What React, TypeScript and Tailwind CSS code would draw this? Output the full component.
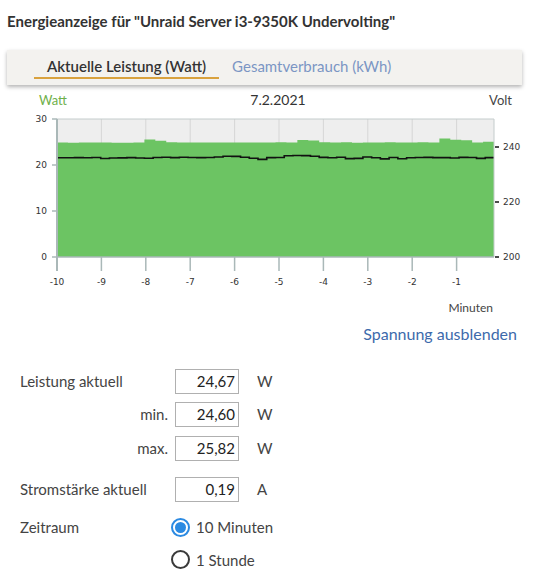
import React from "react";

const PX0 = 57;
const PX1 = 494;
const tops = [142.5,142.8,142.6,142.5,142.6,142.7,142.8,142.6,139.5,140.8,142.3,142.5,142.4,142.6,142.5,142.4,142.5,142.5,142.6,142.4,142.3,142.6,140,140.6,142.2,142.5,142.3,142.8,142.4,142.6,142.3,142.5,142.4,142.3,142.5,138.5,139.8,140.2,142.5,141.8];
const volts = [157.8,157.8,157.6,157.8,157.5,158.5,158,157.9,157.6,158,158.2,157.5,157.2,157.6,157.3,157.5,157.6,157.5,157,156.2,156.4,157.2,158.2,159.4,157.6,157.5,155.8,155.5,155.6,156.2,157.4,157.8,157.2,158.6,158.4,157,157.8,158.9,157.5,158.8,157.8,157.5,157.4,157.6,157.6,158,157.4,157.5,158.4,157.6];

function stepPath(vals: number[]) {
  const w = (PX1 - PX0) / vals.length;
  let d = `M${PX0},${vals[0]}`;
  vals.forEach((v, i) => {
    const x0 = PX0 + i * w;
    const x1 = PX0 + (i + 1) * w;
    d += ` L${x0.toFixed(2)},${v} L${x1.toFixed(2)},${v}`;
  });
  return d;
}

function Chart() {
  const xs = [-10, -9, -8, -7, -6, -5, -4, -3, -2, -1];
  const xpos = (m: number) => PX0 + (m + 10) * 44.4;
  const greenD = stepPath(tops) + ` L${PX1},257 L${PX0},257 Z`;
  const voltD = stepPath(volts);
  return (
    <svg width="546" height="235" viewBox="0 85 546 235" className="block">
      <rect x={PX0} y={119} width={PX1 - PX0} height={138} fill="#eeeeee" />
      {xs.slice(1).map((m) => (
        <line key={m} x1={xpos(m)} x2={xpos(m)} y1={119} y2={257} stroke="#d6d6d6" strokeWidth="1" />
      ))}
      <path d={greenD} fill="#6cc463" />
      <path d={voltD} fill="none" stroke="#111" strokeWidth="1.6" />
      <line x1={PX0} x2={PX1} y1={119} y2={119} stroke="#c4cccc" strokeWidth="1" />
      <line x1={PX0} x2={PX0} y1={119} y2={270} stroke="#aab8b8" strokeWidth="2" />
      <line x1={PX1} x2={PX1} y1={119} y2={257} stroke="#c4cccc" strokeWidth="1" />
      <line x1={PX0} x2={PX1} y1={257} y2={257} stroke="#aab8b8" strokeWidth="1.5" />
      {[0, 10, 20, 30].map((v) => {
        const y = 257 - v * 4.6;
        return (
          <g key={v}>
            <line x1={52} x2={57} y1={y} y2={y} stroke="#aab8b8" strokeWidth="1.5" />
            <text x={47} y={y + 3} textAnchor="end" fontSize="9" fill="#333" fontFamily="'DejaVu Sans', sans-serif">{v}</text>
          </g>
        );
      })}
      {[200, 220, 240].map((v) => {
        const y = 257 - (v - 200) * 2.75;
        return (
          <g key={v}>
            <line x1={495} x2={499} y1={y} y2={y} stroke="#111" strokeWidth="1.5" />
            <text x={503} y={y + 3} fontSize="9" fill="#333" fontFamily="'DejaVu Sans', sans-serif">{v}</text>
          </g>
        );
      })}
      {xs.map((m) => (
        <g key={m}>
          <line x1={xpos(m)} x2={xpos(m)} y1={257} y2={271} stroke="#aab8b8" strokeWidth={m === -10 ? 2 : 1.5} />
          <text x={xpos(m)} y={285} textAnchor="middle" fontSize="9" fill="#333" fontFamily="'DejaVu Sans', sans-serif">{m}</text>
        </g>
      ))}
      <text x={493} y={312} textAnchor="end" fontSize="12" fill="#444" fontFamily="Lato, 'Noto Sans', sans-serif">Minuten</text>
      <text x={39} y={105} fontSize="13" fill="#6fb04a" fontFamily="Lato, 'Noto Sans', sans-serif">Watt</text>
      <text x={278} y={105} textAnchor="middle" fontSize="14" fill="#333" fontFamily="Lato, 'Noto Sans', sans-serif">7.2.2021</text>
      <text x={512} y={105} textAnchor="end" fontSize="13" fill="#444" fontFamily="Lato, 'Noto Sans', sans-serif">Volt</text>
    </svg>
  );
}

function NumBox({ v }: { v: string }) {
  return (
    <div className="w-[64px] h-[25px] border border-[#b0b0b0] bg-white flex items-center justify-end pr-[3px] text-[15px] text-[#222]">
      {v}
    </div>
  );
}

function Row({ label, right, v, unit, className }: { label: string; right?: boolean; v: string; unit: string; className?: string }) {
  return (
    <div className={"flex items-center " + (className || "")}>
      <div className={"w-[148px] text-[15px] text-[#444] " + (right ? "text-right" : "")}>{label}</div>
      <div className="ml-[7px]"><NumBox v={v} /></div>
      <div className="ml-[18px] text-[15px] text-[#444]">{unit}</div>
    </div>
  );
}

function Radio({ checked, label, className }: { checked?: boolean; label: string; className?: string }) {
  return (
    <div className={"flex items-center " + (className || "")}>
      {checked ? (
        <div className="w-[19px] h-[19px] rounded-full border-[2px] border-[#2b8ae2] flex items-center justify-center">
          <div className="w-[11px] h-[11px] rounded-full bg-[#2b8ae2]" />
        </div>
      ) : (
        <div className="w-[19px] h-[19px] rounded-full border-[2px] border-[#3a3a3a]" />
      )}
      <span className="ml-[6px] text-[15px] text-[#444]">{label}</span>
    </div>
  );
}

export default function App() {
  return (
    <div className="w-[546px] h-[583px] bg-white overflow-hidden" style={{ fontFamily: "Lato, 'Noto Sans', sans-serif" }}>
      <div className="pt-[11px] pl-[7px] text-[15px] leading-[20px] font-bold text-[#333]">
        Energieanzeige für "Unraid Server i3-9350K Undervolting"
      </div>
      <div className="mt-[19px] ml-[7px] w-[515px] h-[35px] bg-[#f3f2ef] shadow-[0_2px_4px_rgba(0,0,0,0.3)] flex pl-[27px]">
        <div className="h-[29px] pt-[6px] px-[13px] border-b-2 border-[#d9a23e] text-[15px] leading-[20px] font-semibold text-[#333]">
          Aktuelle Leistung (Watt)
        </div>
        <div className="h-[29px] pt-[6px] px-[13px] text-[15px] leading-[20px] text-[#7b96c4]">
          Gesamtverbrauch (kWh)
        </div>
      </div>
      <Chart />
      <div className="flex justify-end pr-[29px] mt-[3px]">
        <span className="text-[16px] leading-[22px] text-[#3d6aab]">Spannung ausblenden</span>
      </div>
      <div className="pl-[20px] mt-[24px]">
        <Row label="Leistung aktuell" v="24,67" unit="W" />
        <Row label="min." right v="24,60" unit="W" className="mt-[8px]" />
        <Row label="max." right v="25,82" unit="W" className="mt-[9px]" />
        <Row label="Stromstärke aktuell" v="0,19" unit="A" className="mt-[16px]" />
        <div className="flex items-start mt-[14px]">
          <div className="w-[151px] text-[15px] text-[#444] leading-[22px]">Zeitraum</div>
          <div className="flex flex-col">
            <Radio checked label="10 Minuten" />
            <Radio label="1 Stunde" className="mt-[10px]" />
          </div>
        </div>
      </div>
    </div>
  );
}
